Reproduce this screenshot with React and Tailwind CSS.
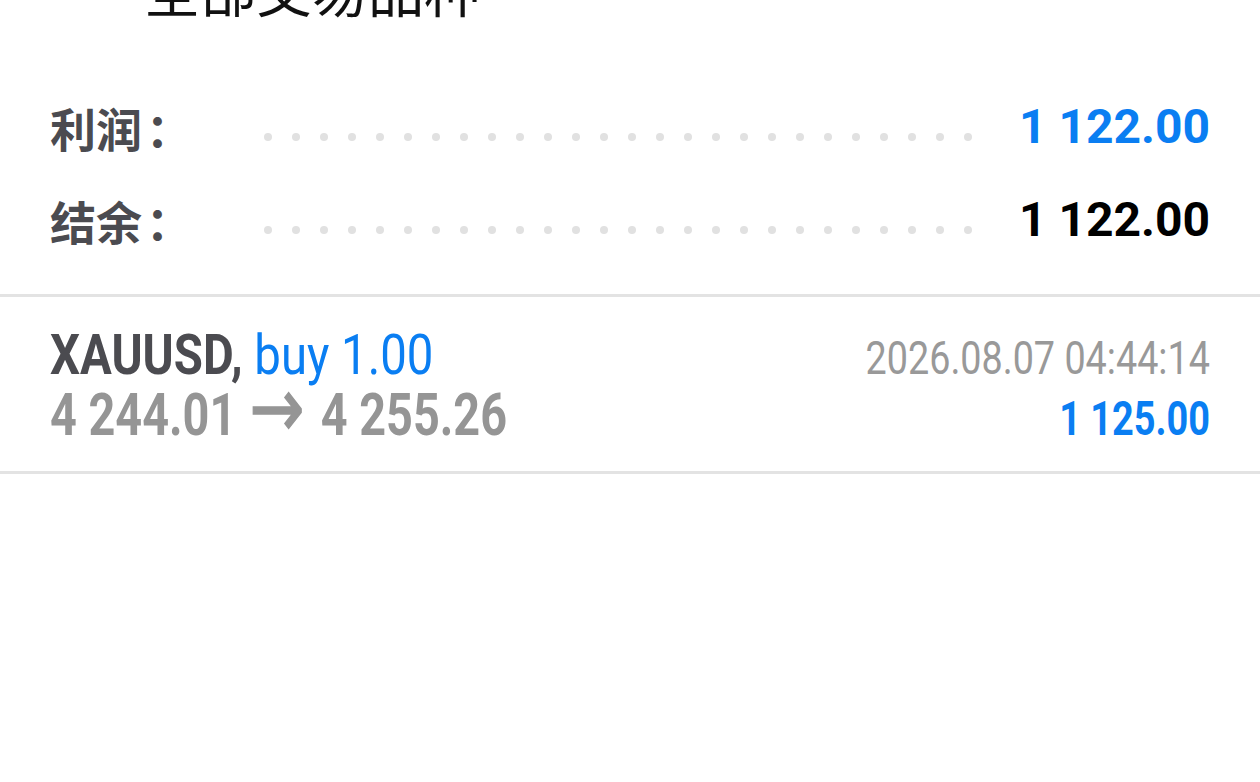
import React from "react";

const SUMMARY = [
  { label: "利润", value: "1 122.00", tone: "text-[#0a7ef2]" },
  { label: "结余", value: "1 122.00", tone: "text-black" },
];

const DOTS = Array.from({ length: 26 });

function DotLeader() {
  return (
    <div className="flex-1 flex items-center gap-[20px] overflow-hidden mt-[20px] mr-[40px]">
      {DOTS.map((_, i) => (
        <span key={i} className="block w-2 h-2 shrink-0 rounded-full bg-[#e1e1e1]" />
      ))}
    </div>
  );
}

function SummaryRow({ label, value, tone }) {
  return (
    <div className="flex items-center h-[93px] pl-[50px] pr-[50px]">
      <div
        className="w-[214px] shrink-0 text-[46px] leading-none font-bold text-[#4b4b50] whitespace-nowrap"
        style={{ fontFamily: '"Noto Sans CJK SC", sans-serif' }}
      >
        {label}
        <span className="ml-[4px]">：</span>
      </div>
      <DotLeader />
      <div className={`text-[48px] leading-none font-bold ${tone}`}>{value}</div>
    </div>
  );
}

export default function App() {
  return (
    <div
      className="w-[1260px] h-[782px] bg-white overflow-hidden"
      style={{ fontFamily: "Roboto, sans-serif" }}
    >
      {/* header title, scrolled mostly out of view */}
      <div
        className="-mt-[40px] pl-[144px] text-[56px] leading-[56px] text-[#111]"
        style={{ fontFamily: '"Noto Sans CJK SC", sans-serif' }}
      >
        全部交易品种
      </div>

      {/* account summary */}
      <div className="mt-[64px]">
        {SUMMARY.map((row) => (
          <SummaryRow key={row.label} {...row} />
        ))}
      </div>

      <div className="mt-[28px] h-[3px] bg-[#e3e3e3]" />

      {/* closed position */}
      <div className="pt-[28px] pb-[24px] pl-[50px] pr-[50px]">
        <div className="flex justify-between items-baseline h-[61px] leading-[61px]">
          <span className="inline-block origin-left scale-x-[0.86] whitespace-nowrap text-[55px]">
            <span className="font-bold text-[#4b4b50]">XAUUSD,</span>{" "}
            <span className="text-[#0a7ef2]">buy 1.00</span>
          </span>
          <span className="inline-block origin-right scale-x-[0.82] whitespace-nowrap text-[46px] text-[#999999]">
            2026.08.07 04:44:14
          </span>
        </div>
        <div className="flex justify-between items-baseline h-[61px] leading-[57px]">
          <span className="inline-block origin-left scale-x-[0.78] whitespace-nowrap text-[60px] font-bold text-[#959595]">
            4 244.01{" "}
            <span
              className="relative top-[2px] text-[84px] leading-[0] font-normal ml-[2px] mr-[6px] [-webkit-text-stroke:1.5px_#959595]"
              style={{ fontFamily: '"DejaVu Sans", sans-serif' }}
            >
              →
            </span>{" "}
            4 255.26
          </span>
          <span className="inline-block origin-right scale-x-[0.79] whitespace-nowrap text-[48px] font-bold text-[#0a7ef2]">
            1 125.00
          </span>
        </div>
      </div>

      <div className="h-[3px] bg-[#e3e3e3]" />
    </div>
  );
}
